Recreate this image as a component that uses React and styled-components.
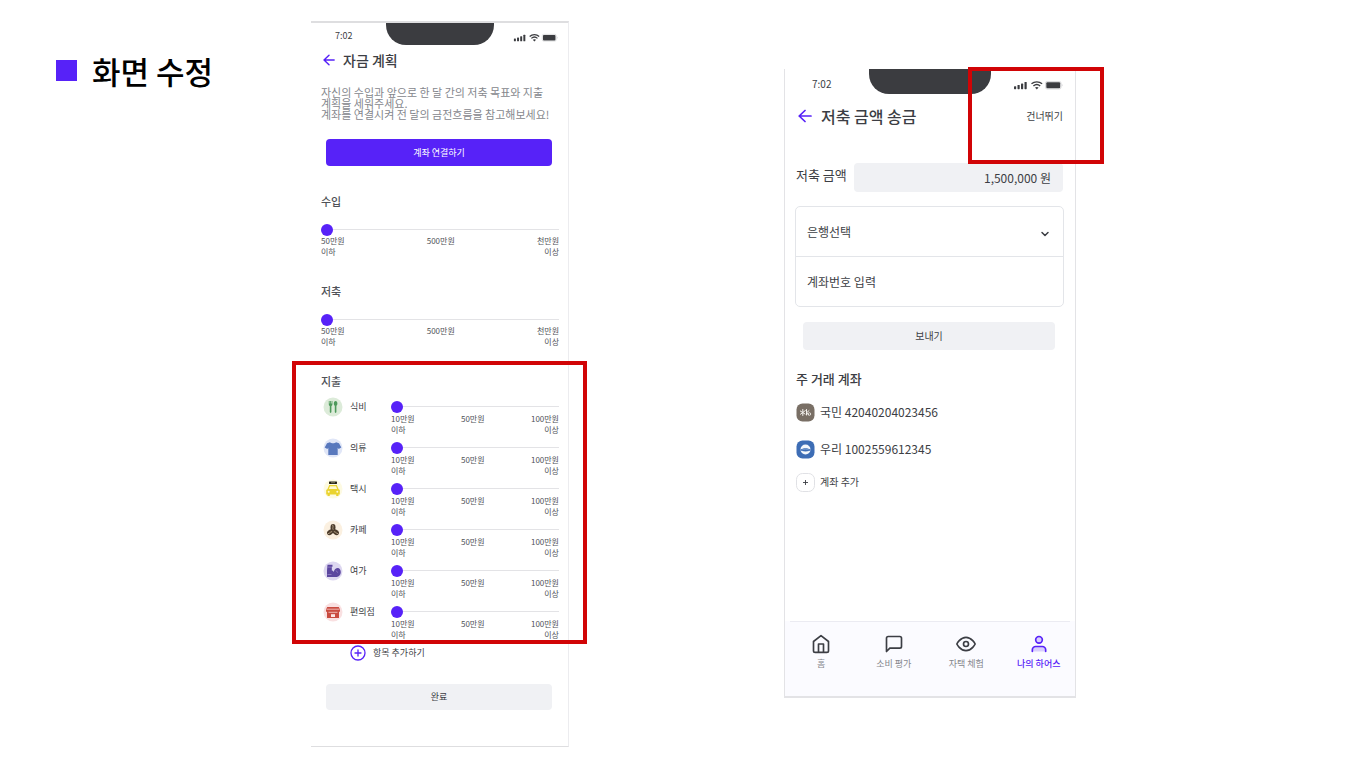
import React from "react";
import styled, { createGlobalStyle } from "styled-components";

const violet = "#5722f8";
const ink = "#3c3e44";
const soft = "#505258";

const GlobalStyle = createGlobalStyle`
  *, *::before, *::after { box-sizing: border-box; }
  body {
    margin: 0;
    background: #fff;
    color: ${ink};
    font-family: "Noto Sans CJK KR", "Noto Sans", sans-serif;
  }
  button, input, select { font: inherit; color: inherit; margin: 0; padding: 0; border: 0; }
  button { cursor: pointer; background: none; }
  h1, h2, h3, p, ul { margin: 0; padding: 0; }
  ul { list-style: none; }
`;

const Slide = styled.main`
  display: grid;
  grid-template-columns: 311fr 258fr 215fr 292fr 290fr;
  align-items: start;
  padding: 21px 0;
`;

const Title = styled.h1`
  display: flex;
  align-items: center;
  gap: 15px;
  padding: 27px 0 0 56px;
  font-size: 31px;
  line-height: 45px;
  font-weight: 500;
  color: #000;
  white-space: nowrap;

  &::before {
    content: "";
    width: 21px;
    height: 21px;
    background: ${violet};
  }
`;

const PlanScreen = styled.section`
  grid-column: 2;
  padding: 0 9px 36px 10px;
  border-top: 2px solid #dedee0;
  border-right: 1px solid #ececef;
  border-bottom: 1px solid #dedee0;
`;

const TransferScreen = styled.section`
  grid-column: 4;
  position: relative;
  margin-top: 48px;
  border: solid #e3e3e6;
  border-width: 0 1px 2px;
`;

const TransferBody = styled.div`
  padding: 0 12px 0 11px;
`;

const StatusRow = styled.div`
  display: grid;
  grid-template-columns: 1fr auto 1fr;
  height: ${(p) => (p.$large ? 31 : 26)}px;
  font-size: ${(p) => (p.$large ? 10 : 9)}px;
  line-height: ${(p) => (p.$large ? 30 : 26)}px;

  > span { padding-left: ${(p) => (p.$large ? 16 : 14)}px; }
  > svg { justify-self: end; margin: ${(p) => (p.$large ? "11px 0 0" : "10px 1px 0")}; }
`;

const Notch = styled.div`
  width: ${(p) => (p.$large ? 122 : 108)}px;
  height: ${(p) => (p.$large ? 25 : 22)}px;
  background: #3b3c40;
  border-radius: 0 0 20px 20px;
`;

const Header = styled.header`
  display: flex;
  align-items: center;
  gap: ${(p) => (p.$large ? 9 : 8)}px;
  height: ${(p) => (p.$large ? 32 : 22)}px;
  padding-left: 2px;
`;

const BackButton = styled.button`
  display: flex;
  color: ${violet};
`;

const ScreenTitle = styled.h2`
  flex: 1;
  font-size: ${(p) => (p.$large ? 16 : 14)}px;
  line-height: 22px;
  font-weight: 500;
`;

const SkipButton = styled.button`
  font-size: 10px;
  line-height: 16px;
`;

const Intro = styled.p`
  margin-top: 16px;
  font-size: 11px;
  line-height: 11px;
  color: #85878d;
  white-space: nowrap;
`;

const ActionButton = styled.button`
  display: block;
  width: calc(100% - ${(p) => (p.$large ? 15 : 12)}px);
  height: ${(p) => p.$height}px;
  margin: ${(p) => p.$top}px 8px 0 ${(p) => (p.$large ? 7 : 5)}px;
  border-radius: 4px;
  font-size: ${(p) => (p.$large ? 10 : 9)}px;
  line-height: 14px;
  background: ${(p) => (p.$primary ? violet : "#f0f1f4")};
  color: ${(p) => (p.$primary ? "#fff" : ink)};
`;

const Group = styled.section`
  position: relative;
  margin-top: ${(p) => p.$top}px;
`;

const GroupTitle = styled.h3`
  margin-bottom: ${(p) => p.$bottom}px;
  font-size: 11px;
  line-height: 16px;
  font-weight: 500;
  color: ${soft};
`;

const Range = styled.input.attrs({ type: "range", min: 0, max: 100, defaultValue: 0 })`
  appearance: none;
  display: block;
  width: 100%;
  height: 11px;
  background: linear-gradient(#e3e3e6, #e3e3e6) center / 100% 1px no-repeat;

  &::-webkit-slider-thumb {
    appearance: none;
    width: 12px;
    height: 12px;
    border-radius: 50%;
    background: ${violet};
  }
`;

const Scale = styled.div`
  display: flex;
  justify-content: space-between;
  margin-top: ${(p) => (p.$gap ? 1 : 0)}px;
  font-size: 8px;
  line-height: 11px;
  color: ${soft};

  > span:last-child { text-align: right; }
`;

const ExpenseList = styled.ul`
  display: grid;
  gap: 2px;
`;

const ExpenseRow = styled.li`
  display: grid;
  grid-template-columns: 20px 1fr 168px;
  height: 39px;
  padding-left: 2px;

  > label {
    padding-left: 7px;
    font-size: 9px;
    line-height: 20px;
  }
  > div { padding-top: 4px; }
`;

const Highlight = styled.div`
  position: absolute;
  inset: -12px -28px -3px -29px;
  border: 4px solid #d10406;
  pointer-events: none;
`;

const SkipHighlight = styled(Highlight)`
  inset: -2px -29px auto auto;
  width: 136px;
  height: 97px;
`;

const AddItem = styled.button`
  display: flex;
  align-items: center;
  gap: 7px;
  margin: 4px 0 0 29px;
  font-size: 9px;
  line-height: 16px;
`;

const AmountRow = styled.div`
  display: flex;
  gap: 7px;
  margin-top: 31px;

  > label {
    font-size: 13px;
    line-height: 24px;
    white-space: nowrap;
  }
  > input {
    flex: 1;
    min-width: 0;
    height: 29px;
    padding: 0 12px;
    border-radius: 4px;
    background: #f0f1f4;
    font-size: 12px;
    text-align: right;
  }
`;

const AccountForm = styled.div`
  position: relative;
  margin: 14px -1px 0;
  border: 1px solid #e3e5e9;
  border-radius: 5px;

  > svg {
    position: absolute;
    top: 22px;
    right: 13px;
    pointer-events: none;
  }
`;

const fieldStyle = `
  appearance: none;
  display: block;
  width: 100%;
  height: 49px;
  padding: 0 11px;
  background: none;
  font-size: 12px;
`;

const BankSelect = styled.select`
  &&& { ${fieldStyle} height: 50px; border-bottom: 1px solid #e3e5e9; }
`;

const AccountInput = styled.input`
  &&& { ${fieldStyle} }
  &::placeholder { color: ${ink}; opacity: 1; }
`;

const AccountsTitle = styled.h3`
  margin-top: 20px;
  font-size: 13px;
  line-height: 18px;
  font-weight: 500;
`;

const Account = styled.button`
  display: flex;
  align-items: center;
  gap: 5px;
  height: 20px;
  margin-top: ${(p) => p.$top}px;
  font-size: ${(p) => (p.$small ? 10 : 12)}px;
  line-height: 20px;
`;

const TabBar = styled.nav`
  display: grid;
  grid-template-columns: repeat(4, 1fr);
  height: 75px;
  margin-top: 129px;
  padding-top: 13px;
  background: linear-gradient(#ebebf2, #ebebf2) top center / calc(100% - 10px) 1px no-repeat #fbfbff;
`;

const Tab = styled.a`
  display: flex;
  flex-direction: column;
  align-items: center;
  gap: 3px;
  font-size: 9px;
  line-height: 14px;
  font-weight: ${(p) => (p.$active ? 500 : 400)};
  color: ${(p) => (p.$active ? violet : "#85878d")};
  text-decoration: none;

  svg { color: ${(p) => (p.$active ? violet : ink)}; }
`;

const StatusIcons = ({ width }) => (
  <svg width={width} height={width / 5} viewBox="0 0 50 10" fill="#3b3c40" aria-hidden="true">
    <rect x="1" y="6.2" width="2.2" height="3" rx=".6" />
    <rect x="4.5" y="5" width="2.2" height="4.2" rx=".6" />
    <rect x="8" y="3.6" width="2.2" height="5.6" rx=".6" />
    <rect x="11.5" y="2" width="2.2" height="7.2" rx=".6" />
    <g fill="none" stroke="#3b3c40" strokeWidth="1.4">
      <path d="M18.500 3.800c3-2.600 7.600-2.600 10.600 0M20.400 6c2-1.800 4.800-1.800 6.800 0" />
    </g>
    <path d="M22 7.600c1.100-.9 2.500-.9 3.600 0l-1.800 1.800z" />
    <rect x="32.5" y="1.500" width="15.500" height="7.500" rx="1.600" fill="none" stroke="#c4c5c8" strokeWidth=".6" />
    <rect x="33.300" y="2.200" width="13.900" height="6.100" rx="1" />
    <path d="M48.800 4v2.600c.9-.5.900-2.100 0-2.600" fill="#c4c5c8" />
  </svg>
);

const BackIcon = ({ size }) => (
  <svg width={size} height={size} viewBox="0 0 14 14" fill="none" stroke="currentColor" strokeWidth="1.700" strokeLinecap="round" strokeLinejoin="round">
    <path d="M13 7H1.200M7 1.500 1.200 7 7 12.500" />
  </svg>
);

const art = {
  food: {
    bg: "#dcebd9",
    draw: (
      <g fill="#4d9a5b">
        <path d="M5.800 4h.8v2.500h.6V4H8v2.500h.6V4h.8v3.200c0 1-.5 1.500-1 1.700v6.200a.8.8 0 0 1-1.600 0V8.900c-.5-.2-1-.7-1-1.700z" />
        <path d="M12.600 4c1.100 0 1.800 1 1.800 2.400s-.6 2-1 2.300v6.400a.8.800 0 0 1-1.600 0V8.700c-.5-.3-1-.9-1-2.300S11.500 4 12.600 4z" />
      </g>
    ),
  },
  clothes: {
    bg: "#e0e6f7",
    draw: <path d="M7 4.200c1.200 1.500 4.800 1.500 6 0l3 1 2.300 4.300-2.600 1.600-1-1.300v7.200H5.300V9.800l-1 1.300-2.600-1.600L4 5.200z" fill="#5878bd" />,
  },
  taxi: {
    bg: "#fdfae2",
    draw: (
      <>
        <rect x="6" y="2.500" width="8" height="2.400" rx=".4" fill="#252318" />
        <path d="M8 3.700h4" stroke="#bbb58c" strokeWidth=".6" />
        <path d="M6.200 6h7.600l1.700 4 1.300 1v4.500h-1.300V17h-2.300v-1.500H6.800V17H4.500v-1.500H3.200V11l1.300-1z" fill="#ead32e" />
        <path d="M7 7.200h6l1.100 2.900H5.900z" fill="#fff9d2" />
        <circle cx="5.700" cy="12.700" r="1" fill="#fff9d2" />
        <circle cx="14.300" cy="12.700" r="1" fill="#fff9d2" />
      </>
    ),
  },
  cafe: {
    bg: "#fbf0e0",
    draw: (
      <>
        <g fill="#4b3b2b">
          <ellipse cx="10" cy="7.400" rx="2.500" ry="3.300" />
          <ellipse cx="7.200" cy="12.200" rx="2.500" ry="3.400" transform="rotate(55 7.200 12.200)" />
          <ellipse cx="12.800" cy="12.200" rx="2.500" ry="3.400" transform="rotate(-55 12.800 12.200)" />
        </g>
        <path d="M9.500 4.800c1.500 2-.5 3 .7 5M4.800 13.600c2 .3 2-1.800 4.300-2M15.200 13.600c-2 .3-2-1.800-4.300-2" fill="none" stroke="#d9c4a4" strokeWidth=".7" />
      </>
    ),
  },
  leisure: {
    bg: "#ddd7f0",
    draw: (
      <>
        <path d="M4.500 3.800h5v1.800l-.7.700v3.300c.9 0 1.400.6 1.900 1.300.6-2.400 2.200-3.900 4.100-3.900 1.700 0 3 1.700 3 4 0 2.800-2 5-4.700 5H4V9.500z" fill="#5b469f" />
        <path d="M4.500 6.100H9M13.100 9.500l1.600 2.200M4.500 13.500h4" stroke="#9d8dcb" strokeWidth=".7" />
      </>
    ),
  },
  store: {
    bg: "#f9e0e1",
    draw: (
      <>
        <path d="M4.200 5h11.600l1.200 2.500v2.300h-1V16H4v-6.200H3V7.500z" fill="#c94b40" />
        <path d="M3.500 7.200h13M5.500 10.300h9" stroke="#f7cfcb" strokeWidth=".8" />
        <path d="M8 12.200h4V15H8z" fill="#fbe6e4" />
      </>
    ),
  },
};

const CategoryIcon = ({ kind }) => (
  <svg width="20" height="20" viewBox="0 0 20 20" aria-hidden="true">
    <circle cx="10" cy="10" r="9.500" fill={art[kind].bg} />
    {art[kind].draw}
  </svg>
);

const tabs = [
  { name: "홈", icon: <path d="m3 9 9-7 9 7v11a2 2 0 0 1-2 2H5a2 2 0 0 1-2-2zM9 22V12h6v10" /> },
  { name: "소비 평가", icon: <path d="M21 15a2 2 0 0 1-2 2H7l-4 4V5a2 2 0 0 1 2-2h14a2 2 0 0 1 2 2z" /> },
  { name: "자택 체험", icon: <><path d="M1 12s4-8 11-8 11 8 11 8-4 8-11 8-11-8-11-8z" /><circle cx="12" cy="12" r="3" /></> },
  {
    name: "나의 하어스",
    active: true,
    icon: <><path d="M20 21v-2a4 4 0 0 0-4-4H8a4 4 0 0 0-4 4v2" fill="#d9cffd" /><circle cx="12" cy="7" r="4" fill="#d9cffd" /></>,
  },
];

const expenses = [
  ["food", "식비"],
  ["clothes", "의류"],
  ["taxi", "택시"],
  ["cafe", "카페"],
  ["leisure", "여가"],
  ["store", "편의점"],
];

const Labels = ({ low, mid, high, gap }) => (
  <Scale $gap={gap}>
    <span>{low}<br />이하</span>
    <span>{mid}</span>
    <span>{high}<br />이상</span>
  </Scale>
);

const BudgetGroup = ({ id, title, top }) => (
  <Group $top={top}>
    <GroupTitle $bottom={15}><label htmlFor={id}>{title}</label></GroupTitle>
    <Range id={id} />
    <Labels low="50만원" mid="500만원" high="천만원" />
  </Group>
);

export default function App() {
  return (
    <>
      <GlobalStyle />
      <Slide>
        <Title>화면 수정</Title>

        <PlanScreen>
          <StatusRow>
            <span>7:02</span>
            <Notch />
            <StatusIcons width={45} />
          </StatusRow>
          <Header>
            <BackButton aria-label="뒤로"><BackIcon size={12} /></BackButton>
            <ScreenTitle>자금 계획</ScreenTitle>
          </Header>
          <Intro>
            자신의 수입과 앞으로 한 달 간의 저축 목표와 지출<br />
            계획을 세워주세요.<br />
            계좌를 연결시켜 전 달의 금전흐름을 참고해보세요!
          </Intro>
          <ActionButton $primary $top={19} $height={27}>계좌 연결하기</ActionButton>

          <BudgetGroup id="income" title="수입" top={27} />
          <BudgetGroup id="saving" title="저축" top={26} />

          <Group $top={26}>
            <GroupTitle $bottom={8}>지출</GroupTitle>
            <ExpenseList>
              {expenses.map(([kind, name]) => (
                <ExpenseRow key={kind}>
                  <CategoryIcon kind={kind} />
                  <label htmlFor={kind}>{name}</label>
                  <div>
                    <Range id={kind} />
                    <Labels low="10만원" mid="50만원" high="100만원" gap />
                  </div>
                </ExpenseRow>
              ))}
            </ExpenseList>
            <Highlight />
          </Group>

          <AddItem>
            <svg width="16" height="16" viewBox="0 0 16 16" fill="none" stroke={violet} strokeWidth="1.300" strokeLinecap="round">
              <circle cx="8" cy="8" r="7" />
              <path d="M8 5v6M5 8h6" />
            </svg>
            항목 추가하기
          </AddItem>
          <ActionButton $top={23} $height={26}>완료</ActionButton>
        </PlanScreen>

        <TransferScreen>
          <TransferBody>
            <StatusRow $large>
              <span>7:02</span>
              <Notch $large />
              <StatusIcons width={50} />
            </StatusRow>
            <Header $large>
              <BackButton aria-label="뒤로"><BackIcon size={14} /></BackButton>
              <ScreenTitle $large>저축 금액 송금</ScreenTitle>
              <SkipButton>건너뛰기</SkipButton>
            </Header>

            <AmountRow>
              <label htmlFor="amount">저축 금액</label>
              <input id="amount" type="text" defaultValue="1,500,000 원" />
            </AmountRow>

            <AccountForm>
              <BankSelect aria-label="은행선택" defaultValue="">
                <option value="">은행선택</option>
                <option value="kb">국민</option>
                <option value="woori">우리</option>
              </BankSelect>
              <svg width="10" height="10" viewBox="0 0 10 10" fill="none" stroke={ink} strokeWidth="1.500" strokeLinecap="round" strokeLinejoin="round">
                <path d="m2 3.500 3 3 3-3" />
              </svg>
              <AccountInput type="text" aria-label="계좌번호 입력" placeholder="계좌번호 입력" />
            </AccountForm>
            <ActionButton $large $top={15} $height={28}>보내기</ActionButton>

            <AccountsTitle>주 거래 계좌</AccountsTitle>
            <Account $top={14}>
              <svg width="19" height="19" viewBox="0 0 19 19">
                <rect x=".5" y=".5" width="18" height="18" rx="6" fill="#796f65" />
                <path d="M6.800 6.500v6M4.300 8l4.700 3M9.300 7.600l-4.800 3.600M10.500 6.500v5.500M13 7.600l-2.400 2.200 2 2" stroke="#f4f1ed" strokeWidth="1" fill="none" strokeLinecap="round" />
                <circle cx="13.400" cy="11" r="1.300" fill="none" stroke="#f4f1ed" strokeWidth=".8" />
              </svg>
              국민 42040204023456
            </Account>
            <Account $top={17}>
              <svg width="19" height="19" viewBox="0 0 19 19">
                <rect x=".5" y=".5" width="18" height="18" rx="6" fill="#3d6db5" />
                <circle cx="9.500" cy="9.500" r="5" fill="#f3f7fc" />
                <path d="M4 9.800c3-2.200 8-2.200 11 0-1.200 2.200-9.800 2.200-11 0z" fill="#3d6db5" />
                <path d="M6 10c2-1 5-1 7 0" stroke="#8cacd8" strokeWidth=".7" fill="none" />
              </svg>
              우리 1002559612345
            </Account>
            <Account $small $top={13}>
              <svg width="19" height="19" viewBox="0 0 19 19" fill="none">
                <rect x=".5" y=".5" width="18" height="18" rx="6" stroke="#e0e1e5" />
                <path d="M9.500 7v5M7 9.500h5" stroke={ink} strokeWidth=".9" />
              </svg>
              계좌 추가
            </Account>
          </TransferBody>

          <TabBar>
            {tabs.map((tab) => (
              <Tab key={tab.name} href="#" $active={tab.active}>
                <svg width="20" height="20" viewBox="0 0 24 24" fill="none" stroke="currentColor" strokeWidth="2" strokeLinecap="round" strokeLinejoin="round">
                  {tab.icon}
                </svg>
                {tab.name}
              </Tab>
            ))}
          </TabBar>
          <SkipHighlight />
        </TransferScreen>
      </Slide>
    </>
  );
}
